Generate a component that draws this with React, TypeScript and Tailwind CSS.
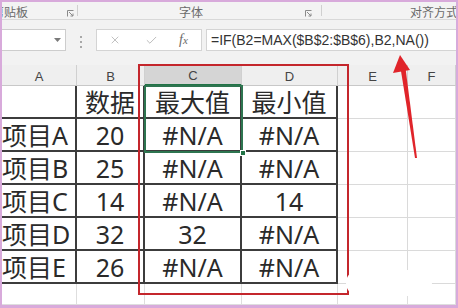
import { X, Check } from "lucide-react";

const rows = [
  ["", "数据", "最大值", "最小值"],
  ["项目A", "20", "#N/A", "#N/A"],
  ["项目B", "25", "#N/A", "#N/A"],
  ["项目C", "14", "#N/A", "14"],
  ["项目D", "32", "32", "#N/A"],
  ["项目E", "26", "#N/A", "#N/A"],
];

const heads = ["A", "B", "C", "D", "E", "F"];

const grid = "grid grid-cols-[75px_68px_97px_96px_70px_48px]";

function RibbonLabels() {
  return (
    <div className="flex h-[18px] bg-[#f3f3f3] border-b border-[#d8d8d8] text-[12px] leading-none text-[#6a6a6a] font-['Noto_Sans_CJK_SC',sans-serif]">
      <div className="w-[75px] flex items-end justify-between pb-[1px] overflow-hidden">
        <span className="-ml-[10px]">剪贴板</span>
        <Launcher />
      </div>
      <div className="w-px my-[3px] bg-[#d0d0d0]" />
      <div className="w-[243px] flex items-end pb-[1px]">
        <span className="ml-[101px]">字体</span>
        <span className="ml-auto mr-[6px]">
          <Launcher />
        </span>
      </div>
      <div className="w-px my-[3px] bg-[#d0d0d0]" />
      <div className="flex-1 flex items-end justify-end pb-[1px] overflow-hidden">
        <span className="whitespace-nowrap -mr-[2px]">对齐方式</span>
      </div>
    </div>
  );
}

function Launcher() {
  return (
    <svg width="7" height="7" viewBox="0 0 7 7" className="mb-[1px] mr-[3px]">
      <path d="M0.5 6.5V0.5H6.5" fill="none" stroke="#8a8a8a" strokeWidth="1" />
      <path d="M2 2L6 6M3.5 6H6V3.5" fill="none" stroke="#8a8a8a" strokeWidth="1" />
    </svg>
  );
}

function FormulaBar() {
  return (
    <div className="h-[45px] bg-[#f2f2f2] flex items-start pt-[9px]">
      <div className="w-[64px] h-[22px] bg-white border border-l-0 border-[#cdcdcd] flex items-center justify-end pr-[4px]">
        <svg width="7" height="4" viewBox="0 0 7 4">
          <path d="M0 0H7L3.5 4Z" fill="#7a7a7a" />
        </svg>
      </div>
      <div className="ml-[14px] mt-[7px] flex flex-col gap-[3px]">
        <span className="w-[2px] h-[2px] bg-[#a8a8a8]" />
        <span className="w-[2px] h-[2px] bg-[#a8a8a8]" />
        <span className="w-[2px] h-[2px] bg-[#a8a8a8]" />
      </div>
      <div className="ml-[14px] w-[106px] h-[22px] bg-white border border-[#d4d4d4] flex items-center">
        <X size={12} strokeWidth={1.4} className="ml-[12px] text-[#a6a6a6]" />
        <Check size={13} strokeWidth={1.4} className="ml-[24px] text-[#a6a6a6]" />
        <span className="ml-[21px] text-[14px] italic text-[#6a6a6a] font-['Liberation_Serif',serif] leading-none">
          f<span className="text-[11px]">x</span>
        </span>
      </div>
      <div className="ml-[4px] flex-1 h-[22px] bg-white border border-r-0 border-[#d4d4d4] flex items-center pl-[4px] text-[14px] text-[#333] font-['Liberation_Sans',sans-serif] whitespace-nowrap">
        =IF(B2=MAX($B$2:$B$6),B2,NA())
      </div>
    </div>
  );
}

function HeaderRow() {
  return (
    <div className={`${grid} h-[21px] font-['Liberation_Sans',sans-serif] text-[13px] text-[#444]`}>
      {heads.map((h) => (
        <div
          key={h}
          className={`flex items-end justify-center pb-[2px] leading-none border-r border-[#d0d0d0] ${
            h === "C"
              ? "bg-[#d5d5d5] border-b-2 border-b-[#217346]"
              : "bg-[#efefef] border-b border-b-[#c8c8c8]"
          }`}
        >
          {h}
        </div>
      ))}
    </div>
  );
}

function DataRow({ cells }: { cells: string[] }) {
  return (
    <div className={`${grid} h-[33px] font-['Noto_Sans','Noto_Sans_CJK_SC',sans-serif] text-[25px] leading-none text-[#2a2a2a]`}>
      {cells.map((c, i) => (
        <div
          key={i}
          className={`flex items-end pb-[2px] whitespace-nowrap border-r-2 border-b-2 border-[#3c3c3c] ${
            i === 0 ? "justify-start" : "justify-center"
          }`}
        >
          {c}
        </div>
      ))}
      <div className="border-r border-b border-[#dadada]" />
      <div className="border-r border-b border-[#dadada]" />
    </div>
  );
}

function BlankRow() {
  return (
    <div className={`${grid} h-[21px]`}>
      {heads.map((h) => (
        <div key={h} className="border-r border-b border-[#dedede]" />
      ))}
    </div>
  );
}

export default function App() {
  return (
    <div className="relative w-[458px] h-[308px] overflow-hidden bg-white border-2 border-b-[3px] border-[#d8aadb] flex flex-col">
      <RibbonLabels />
      <FormulaBar />
      <HeaderRow />
      {rows.map((r, i) => (
        <DataRow key={i} cells={r} />
      ))}
      <BlankRow />

      {/* selection C1:C2 */}
      <div className="absolute left-[142px] top-[83px] w-[99px] h-[68px] border-2 border-[#2e7550] pointer-events-none" />
      <div className="absolute left-[238px] top-[148px] w-[6px] h-[6px] bg-[#217346] border border-white" />

      {/* red annotation box */}
      <div className="absolute left-[136px] top-[62px] w-[211px] h-[231px] border-2 border-[#c4262c]" />

      {/* arrow */}
      <svg className="absolute left-0 top-0" width="454" height="303" viewBox="0 0 454 303">
        <path d="M398 53L391 71L408 68Z" fill="#e0242a" />
        <path d="M398.5 66L403.5 66L415 156L413 156Z" fill="#e0242a" />
      </svg>

      {/* watermark blot */}
      <div className="absolute left-[366px] top-[250px] w-[34px] h-[26px] rounded-[12px] bg-white" />
      <div className="absolute left-[344px] top-[268px] w-[86px] h-[26px] rounded-[13px] bg-white" />
    </div>
  );
}
